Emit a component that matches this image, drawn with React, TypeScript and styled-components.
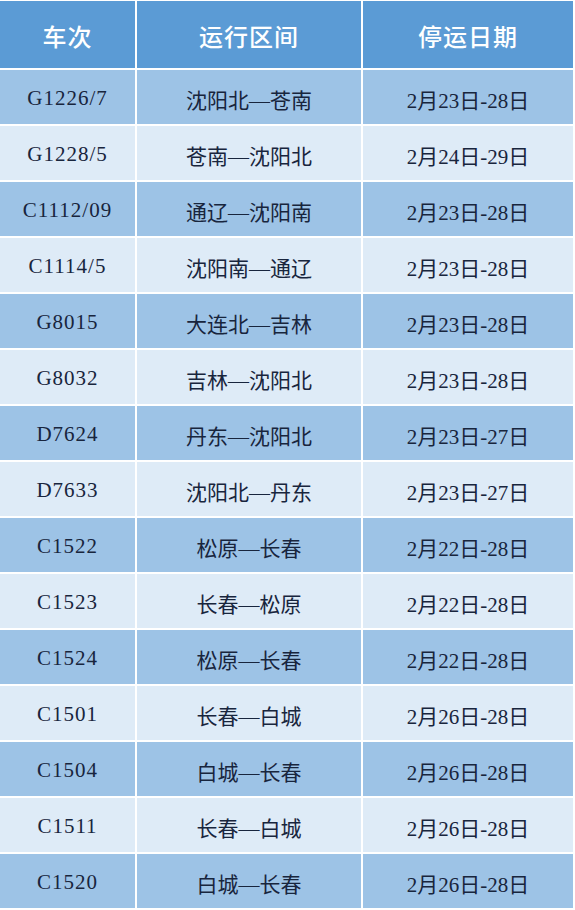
import React from "react";
import styled, { createGlobalStyle } from "styled-components";

type Train = {
    code: string;
    route: string;
    dates: string;
};

const trains: Train[] = [
    { code: "G1226/7", route: "沈阳北—苍南", dates: "2月23日-28日" },
    { code: "G1228/5", route: "苍南—沈阳北", dates: "2月24日-29日" },
    { code: "C1112/09", route: "通辽—沈阳南", dates: "2月23日-28日" },
    { code: "C1114/5", route: "沈阳南—通辽", dates: "2月23日-28日" },
    { code: "G8015", route: "大连北—吉林", dates: "2月23日-28日" },
    { code: "G8032", route: "吉林—沈阳北", dates: "2月23日-28日" },
    { code: "D7624", route: "丹东—沈阳北", dates: "2月23日-27日" },
    { code: "D7633", route: "沈阳北—丹东", dates: "2月23日-27日" },
    { code: "C1522", route: "松原—长春", dates: "2月22日-28日" },
    { code: "C1523", route: "长春—松原", dates: "2月22日-28日" },
    { code: "C1524", route: "松原—长春", dates: "2月22日-28日" },
    { code: "C1501", route: "长春—白城", dates: "2月26日-28日" },
    { code: "C1504", route: "白城—长春", dates: "2月26日-28日" },
    { code: "C1511", route: "长春—白城", dates: "2月26日-28日" },
    { code: "C1520", route: "白城—长春", dates: "2月26日-28日" },
];

function App() {
    return (
        <>
            <GlobalStyle />
            <TableStyle>
                <HeadCell>车次</HeadCell>
                <HeadCell>运行区间</HeadCell>
                <HeadCell>停运日期</HeadCell>
                {trains.map((t, i) => (
                    <React.Fragment key={t.code}>
                        <CodeCell $dark={i % 2 === 0}>{t.code}</CodeCell>
                        <BodyCell $dark={i % 2 === 0}>{t.route}</BodyCell>
                        <BodyCell $dark={i % 2 === 0}>{t.dates}</BodyCell>
                    </React.Fragment>
                ))}
            </TableStyle>
        </>
    );
}
export default App;

//css
const GlobalStyle = createGlobalStyle`
    body {
        margin: 0;
        background: #ffffff;
    }
`;

const TableStyle = styled.div`
    display: grid;
    grid-template-columns: 135px 224px 210px;
    grid-template-rows: 67px repeat(15, 54px);
    gap: 2px;
    padding-top: 1px;
    width: 573px;
    background: #ffffff;
`;

const HeadCell = styled.div`
    display: flex;
    justify-content: center;
    align-items: center;
    padding-top: 1px;
    background: #5b9bd5;
    color: #ffffff;
    font-family: "Noto Sans CJK SC", sans-serif;
    font-size: 24px;
    font-weight: 500;
    letter-spacing: 1px;
`;

const BodyCell = styled.div<{ $dark: boolean }>`
    display: flex;
    justify-content: center;
    align-items: center;
    padding-top: 3px;
    background: ${(props) => (props.$dark ? "#9dc3e6" : "#deebf7")};
    color: #18253d;
    font-family: "Liberation Serif", "Noto Sans CJK SC", serif;
    font-size: 21px;
`;

const CodeCell = styled(BodyCell)`
    letter-spacing: 1px;
`;
